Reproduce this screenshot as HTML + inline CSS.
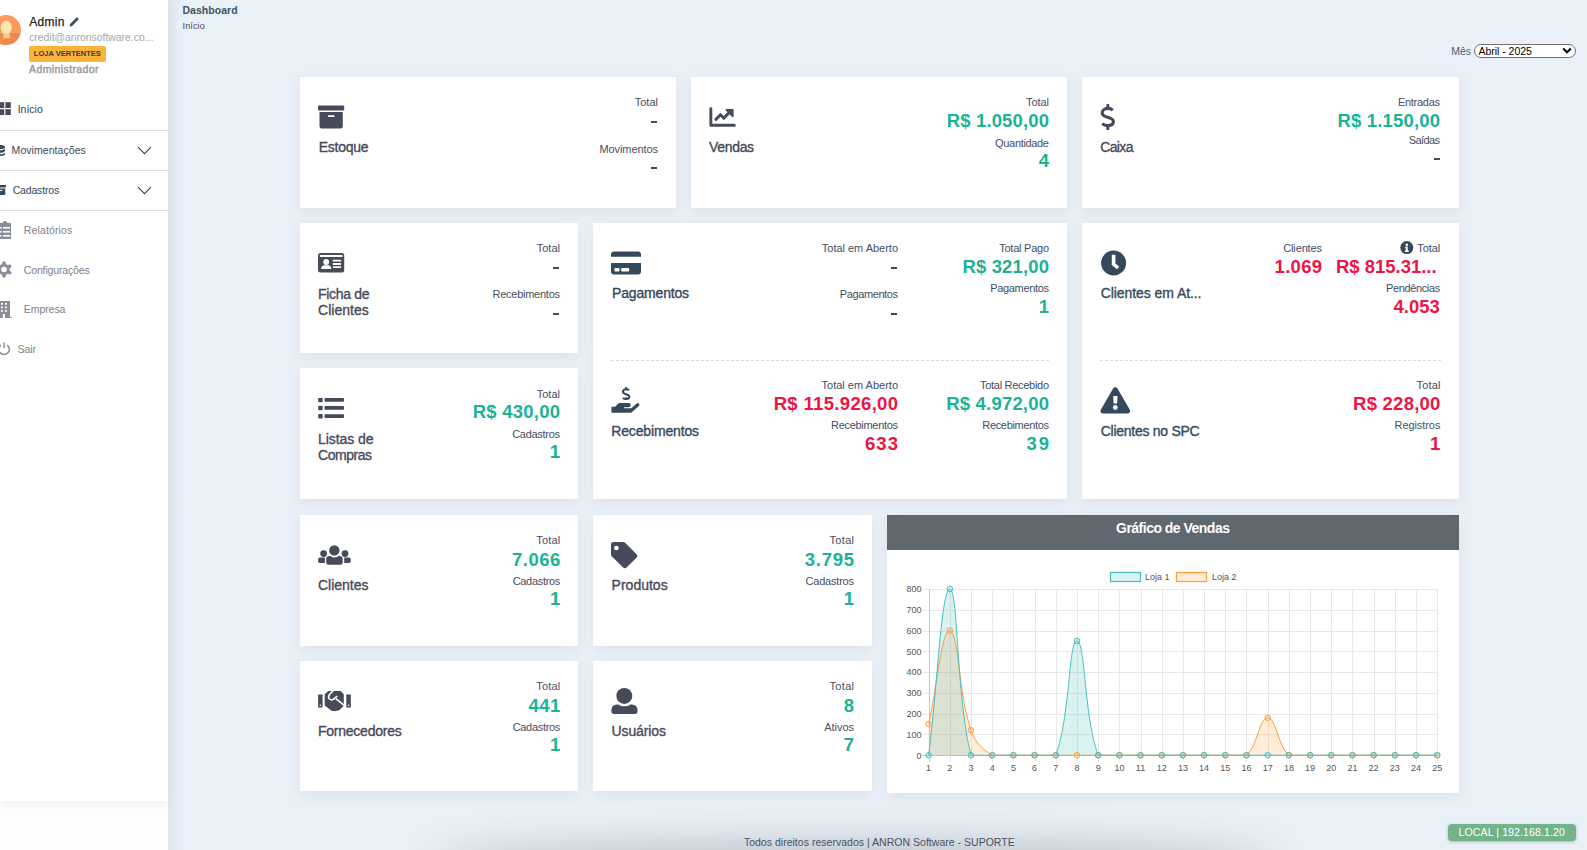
<!DOCTYPE html>
<html><head><meta charset="utf-8"><title>Dashboard</title>
<style>
html,body{margin:0;padding:0;width:1587px;height:850px;overflow:hidden;}
body{background:#eaf0f8;font-family:"Liberation Sans",sans-serif;position:relative;}
.t{position:absolute;white-space:nowrap;font-family:"Liberation Sans",sans-serif;}
.card{position:absolute;background:#fff;box-shadow:0 4px 12px rgba(60,72,72,0.08);}
</style></head><body>
<div style="position:absolute;left:0;top:801px;width:168px;height:49px;background:#fdfdfd"></div>
<div style="position:absolute;left:168px;top:0;width:16px;height:850px;background:linear-gradient(to right,rgba(30,55,85,0.05),rgba(30,55,85,0))"></div>
<div style="position:absolute;left:440px;top:852px;width:830px;height:30px;box-shadow:0 0 40px 6px rgba(50,60,60,0.3);border-radius:50%"></div>
<div class="card" style="left:300px;top:77px;width:376px;height:131px"></div><div class="card" style="left:691px;top:77px;width:376px;height:131px"></div><div class="card" style="left:1082px;top:77px;width:377px;height:131px"></div><div class="card" style="left:300px;top:223px;width:278px;height:130px"></div><div class="card" style="left:300px;top:368px;width:278px;height:131px"></div><div class="card" style="left:593px;top:223px;width:474px;height:276px"></div><div class="card" style="left:1082px;top:223px;width:377px;height:276px"></div><div class="card" style="left:300px;top:515px;width:278px;height:131px"></div><div class="card" style="left:593px;top:515px;width:279px;height:131px"></div><div class="card" style="left:300px;top:661px;width:278px;height:130px"></div><div class="card" style="left:593px;top:661px;width:279px;height:130px"></div><div class="t" style="left:318.8px;top:140px;font-size:14px;line-height:14px;font-weight:400;color:#474a5b;letter-spacing:-0.267px;-webkit-text-stroke:0.35px #474a5b;">Estoque</div><div class="t" style="right:929.00px;top:97px;font-size:11px;line-height:11px;font-weight:400;color:#4a4e5f;">Total</div><div style="position:absolute;left:651px;top:121px;width:6px;height:2px;background:#474a5b;"></div><div class="t" style="right:929.09px;top:144px;font-size:11px;line-height:11px;font-weight:400;color:#4a4e5f;letter-spacing:-0.089px;">Movimentos</div><div style="position:absolute;left:651px;top:167px;width:6px;height:2px;background:#474a5b;"></div><div class="t" style="left:709px;top:140px;font-size:14px;line-height:14px;font-weight:400;color:#474a5b;letter-spacing:-0.320px;-webkit-text-stroke:0.35px #474a5b;">Vendas</div><div class="t" style="right:538.05px;top:97px;font-size:11px;line-height:11px;font-weight:400;color:#4a4e5f;letter-spacing:-0.050px;">Total</div><div class="t" style="right:537.85px;top:112px;font-size:18.5px;line-height:18.5px;font-weight:700;color:#1ab394;letter-spacing:0.150px;">R$ 1.050,00</div><div class="t" style="right:538.33px;top:138px;font-size:11px;line-height:11px;font-weight:400;color:#4a4e5f;letter-spacing:-0.333px;">Quantidade</div><div class="t" style="right:538.00px;top:151.5px;font-size:18.5px;line-height:18.5px;font-weight:700;color:#1ab394;">4</div><div class="t" style="left:1100.2px;top:140px;font-size:14px;line-height:14px;font-weight:400;color:#474a5b;letter-spacing:-0.625px;-webkit-text-stroke:0.35px #474a5b;">Caixa</div><div class="t" style="right:147.29px;top:97px;font-size:11px;line-height:11px;font-weight:400;color:#4a4e5f;letter-spacing:-0.286px;">Entradas</div><div class="t" style="right:146.82px;top:112px;font-size:18.5px;line-height:18.5px;font-weight:700;color:#1ab394;letter-spacing:0.180px;">R$ 1.150,00</div><div class="t" style="right:147.60px;top:135px;font-size:11px;line-height:11px;font-weight:400;color:#4a4e5f;letter-spacing:-0.600px;">Saídas</div><div style="position:absolute;left:1434px;top:158px;width:6px;height:2px;background:#474a5b;"></div><div class="t" style="left:318.1px;top:287px;font-size:14px;line-height:14px;font-weight:400;color:#474a5b;letter-spacing:-0.329px;-webkit-text-stroke:0.35px #474a5b;">Ficha de</div><div class="t" style="left:318.1px;top:303px;font-size:14px;line-height:14px;font-weight:400;color:#474a5b;-webkit-text-stroke:0.35px #474a5b;">Clientes</div><div class="t" style="right:1027.00px;top:243px;font-size:11px;line-height:11px;font-weight:400;color:#4a4e5f;">Total</div><div style="position:absolute;left:553px;top:267px;width:6px;height:2px;background:#474a5b;"></div><div class="t" style="right:1027.25px;top:289px;font-size:11px;line-height:11px;font-weight:400;color:#4a4e5f;letter-spacing:-0.255px;">Recebimentos</div><div style="position:absolute;left:553px;top:313px;width:6px;height:2px;background:#474a5b;"></div><div class="t" style="left:318px;top:432px;font-size:14px;line-height:14px;font-weight:400;color:#474a5b;letter-spacing:-0.062px;-webkit-text-stroke:0.35px #474a5b;">Listas de</div><div class="t" style="left:318px;top:448px;font-size:14px;line-height:14px;font-weight:400;color:#474a5b;letter-spacing:-0.467px;-webkit-text-stroke:0.35px #474a5b;">Compras</div><div class="t" style="right:1027.00px;top:389px;font-size:11px;line-height:11px;font-weight:400;color:#4a4e5f;">Total</div><div class="t" style="right:1026.75px;top:403px;font-size:18.5px;line-height:18.5px;font-weight:700;color:#1ab394;letter-spacing:0.250px;">R$ 430,00</div><div class="t" style="right:1027.29px;top:429px;font-size:11px;line-height:11px;font-weight:400;color:#4a4e5f;letter-spacing:-0.287px;">Cadastros</div><div class="t" style="right:1027.00px;top:443px;font-size:18.5px;line-height:18.5px;font-weight:700;color:#1ab394;">1</div><div class="t" style="left:612px;top:286px;font-size:14px;line-height:14px;font-weight:400;color:#34495e;letter-spacing:-0.167px;-webkit-text-stroke:0.35px #34495e;">Pagamentos</div><div class="t" style="right:689.02px;top:243px;font-size:11px;line-height:11px;font-weight:400;color:#3e4f62;letter-spacing:-0.021px;">Total em Aberto</div><div style="position:absolute;left:891px;top:267px;width:6px;height:2px;background:#34495e;"></div><div class="t" style="right:689.39px;top:289px;font-size:11px;line-height:11px;font-weight:400;color:#3e4f62;letter-spacing:-0.389px;">Pagamentos</div><div style="position:absolute;left:891px;top:313px;width:6px;height:2px;background:#34495e;"></div><div class="t" style="right:538.24px;top:243px;font-size:11px;line-height:11px;font-weight:400;color:#3e4f62;letter-spacing:-0.244px;">Total Pago</div><div class="t" style="right:537.85px;top:258px;font-size:18.5px;line-height:18.5px;font-weight:700;color:#1ab394;letter-spacing:0.150px;">R$ 321,00</div><div class="t" style="right:538.33px;top:283px;font-size:11px;line-height:11px;font-weight:400;color:#3e4f62;letter-spacing:-0.333px;">Pagamentos</div><div class="t" style="right:538.00px;top:298px;font-size:18.5px;line-height:18.5px;font-weight:700;color:#1ab394;">1</div><div style="position:absolute;left:611px;top:360px;width:438px;border-top:1px dashed #d5d8dc"></div><div class="t" style="left:611.2px;top:424px;font-size:14px;line-height:14px;font-weight:400;color:#34495e;letter-spacing:-0.145px;-webkit-text-stroke:0.35px #34495e;">Recebimentos</div><div class="t" style="right:689.00px;top:380px;font-size:11px;line-height:11px;font-weight:400;color:#3e4f62;">Total em Aberto</div><div class="t" style="right:688.67px;top:394.5px;font-size:18.5px;line-height:18.5px;font-weight:700;color:#ef1443;letter-spacing:0.333px;">R$ 115.926,00</div><div class="t" style="right:689.31px;top:420px;font-size:11px;line-height:11px;font-weight:400;color:#3e4f62;letter-spacing:-0.309px;">Recebimentos</div><div class="t" style="right:687.90px;top:435px;font-size:18.5px;line-height:18.5px;font-weight:700;color:#ef1443;letter-spacing:1.100px;">633</div><div class="t" style="right:538.29px;top:380px;font-size:11px;line-height:11px;font-weight:400;color:#3e4f62;letter-spacing:-0.292px;">Total Recebido</div><div class="t" style="right:537.80px;top:394.5px;font-size:18.5px;line-height:18.5px;font-weight:700;color:#1ab394;letter-spacing:0.200px;">R$ 4.972,00</div><div class="t" style="right:538.33px;top:420px;font-size:11px;line-height:11px;font-weight:400;color:#3e4f62;letter-spacing:-0.327px;">Recebimentos</div><div class="t" style="right:536.00px;top:435px;font-size:18.5px;line-height:18.5px;font-weight:700;color:#1ab394;letter-spacing:2.000px;">39</div><div class="t" style="left:1100.7px;top:286px;font-size:14px;line-height:14px;font-weight:400;color:#34495e;letter-spacing:-0.069px;-webkit-text-stroke:0.35px #34495e;">Clientes em At...</div><div class="t" style="right:265.14px;top:243px;font-size:11px;line-height:11px;font-weight:400;color:#3e4f62;letter-spacing:-0.143px;">Clientes</div><div class="t" style="right:264.73px;top:258px;font-size:18.5px;line-height:18.5px;font-weight:700;color:#ef1443;letter-spacing:0.275px;">1.069</div><div class="t" style="right:146.87px;top:243px;font-size:11px;line-height:11px;font-weight:400;color:#3e4f62;letter-spacing:-0.075px;">Total</div><div class="t" style="right:150.42px;top:258px;font-size:18.5px;line-height:18.5px;font-weight:700;color:#ef1443;letter-spacing:-0.018px;">R$ 815.31...</div><div class="t" style="right:147.17px;top:283px;font-size:11px;line-height:11px;font-weight:400;color:#3e4f62;letter-spacing:-0.367px;">Pendências</div><div class="t" style="right:147.18px;top:298px;font-size:18.5px;line-height:18.5px;font-weight:700;color:#ef1443;letter-spacing:0.025px;">4.053</div><div style="position:absolute;left:1100px;top:360px;width:341px;border-top:1px dashed #d5d8dc"></div><div class="t" style="left:1100.7px;top:424px;font-size:14px;line-height:14px;font-weight:400;color:#34495e;letter-spacing:-0.264px;-webkit-text-stroke:0.35px #34495e;">Clientes no SPC</div><div class="t" style="right:146.45px;top:380px;font-size:11px;line-height:11px;font-weight:400;color:#3e4f62;letter-spacing:0.150px;">Total</div><div class="t" style="right:146.35px;top:394.5px;font-size:18.5px;line-height:18.5px;font-weight:700;color:#ef1443;letter-spacing:0.250px;">R$ 228,00</div><div class="t" style="right:146.67px;top:420px;font-size:11px;line-height:11px;font-weight:400;color:#3e4f62;letter-spacing:-0.075px;">Registros</div><div class="t" style="right:146.60px;top:435px;font-size:18.5px;line-height:18.5px;font-weight:700;color:#ef1443;">1</div><div class="t" style="left:317.9px;top:578px;font-size:14px;line-height:14px;font-weight:400;color:#474a5b;letter-spacing:0.014px;-webkit-text-stroke:0.35px #474a5b;">Clientes</div><div class="t" style="right:1026.50px;top:535px;font-size:11px;line-height:11px;font-weight:400;color:#4a4e5f;letter-spacing:0.200px;">Total</div><div class="t" style="right:1026.20px;top:550.5px;font-size:18.5px;line-height:18.5px;font-weight:700;color:#1ab394;letter-spacing:0.500px;">7.066</div><div class="t" style="right:1027.01px;top:576px;font-size:11px;line-height:11px;font-weight:400;color:#4a4e5f;letter-spacing:-0.312px;">Cadastros</div><div class="t" style="right:1026.70px;top:590px;font-size:18.5px;line-height:18.5px;font-weight:700;color:#1ab394;">1</div><div class="t" style="left:611.6px;top:578px;font-size:14px;line-height:14px;font-weight:400;color:#474a5b;-webkit-text-stroke:0.35px #474a5b;">Produtos</div><div class="t" style="right:732.70px;top:535px;font-size:11px;line-height:11px;font-weight:400;color:#4a4e5f;letter-spacing:0.300px;">Total</div><div class="t" style="right:732.25px;top:550.5px;font-size:18.5px;line-height:18.5px;font-weight:700;color:#1ab394;letter-spacing:0.750px;">3.795</div><div class="t" style="right:733.21px;top:576px;font-size:11px;line-height:11px;font-weight:400;color:#4a4e5f;letter-spacing:-0.213px;">Cadastros</div><div class="t" style="right:733.00px;top:590px;font-size:18.5px;line-height:18.5px;font-weight:700;color:#1ab394;">1</div><div class="t" style="left:317.9px;top:724px;font-size:14px;line-height:14px;font-weight:400;color:#474a5b;letter-spacing:-0.227px;-webkit-text-stroke:0.35px #474a5b;">Fornecedores</div><div class="t" style="right:1026.50px;top:681px;font-size:11px;line-height:11px;font-weight:400;color:#4a4e5f;letter-spacing:0.200px;">Total</div><div class="t" style="right:1026.20px;top:696.5px;font-size:18.5px;line-height:18.5px;font-weight:700;color:#1ab394;letter-spacing:0.500px;">441</div><div class="t" style="right:1027.01px;top:722px;font-size:11px;line-height:11px;font-weight:400;color:#4a4e5f;letter-spacing:-0.312px;">Cadastros</div><div class="t" style="right:1026.70px;top:736px;font-size:18.5px;line-height:18.5px;font-weight:700;color:#1ab394;">1</div><div class="t" style="left:611.6px;top:724px;font-size:14px;line-height:14px;font-weight:400;color:#474a5b;letter-spacing:-0.129px;-webkit-text-stroke:0.35px #474a5b;">Usuários</div><div class="t" style="right:732.70px;top:681px;font-size:11px;line-height:11px;font-weight:400;color:#4a4e5f;letter-spacing:0.300px;">Total</div><div class="t" style="right:733.00px;top:696.5px;font-size:18.5px;line-height:18.5px;font-weight:700;color:#1ab394;">8</div><div class="t" style="right:733.04px;top:722px;font-size:11px;line-height:11px;font-weight:400;color:#4a4e5f;letter-spacing:-0.040px;">Ativos</div><div class="t" style="right:733.00px;top:736px;font-size:18.5px;line-height:18.5px;font-weight:700;color:#1ab394;">7</div><svg style="position:absolute;left:318px;top:105px" width="27" height="24" viewBox="0 0 27 24"><rect x="0" y="0.6" width="26.2" height="4.9" rx="1.2" fill="#474a5b"/><path d="M1.5 7h23.3v14.3a2.2 2.2 0 0 1-2.2 2.2H3.7a2.2 2.2 0 0 1-2.2-2.2z" fill="#474a5b"/><rect x="9.8" y="10.3" width="6.8" height="1.8" rx="0.9" fill="#fff"/></svg><svg style="position:absolute;left:700px;top:95px" width="40" height="40" viewBox="0 0 40 40"><path d="M9.4 13.7a1.45 1.45 0 0 1 2.9 0V28.8h22a1.5 1.5 0 0 1 0 3H10.9a1.5 1.5 0 0 1-1.5-1.5z" fill="#474a5b"/><path d="M15.9 24.4l4.6-4.6 3.3 3.3 6.3-6.3" fill="none" stroke="#474a5b" stroke-width="3" stroke-linejoin="miter" stroke-linecap="round"/><path d="M26.4 14.1h6.3a.9.9 0 0 1 .9.9v6.3a.8.8 0 0 1-1.4.6l-6.4-6.4a.8.8 0 0 1 .6-1.4z" fill="#474a5b"/></svg><svg style="position:absolute;left:1090px;top:95px" width="40" height="40" viewBox="0 0 40 40"><rect x="16.3" y="8.9" width="3" height="4.5" rx="0.8" fill="#474a5b"/><rect x="16.3" y="30.5" width="3" height="4.5" rx="0.8" fill="#474a5b"/><path d="M22.8 15.3C21.5 13.9 19.8 13.4 17.8 13.4C14.6 13.4 12.2 15.2 12.2 17.9C12.2 20.6 14.6 21.4 17.7 22.2C21 23.1 23.4 24 23.4 26.6C23.4 29.3 21 30.6 17.8 30.6C15.7 30.6 13.6 30 12.2 28.5" fill="none" stroke="#474a5b" stroke-width="3.1"/></svg><svg style="position:absolute;left:318px;top:253px" width="27" height="20" viewBox="0 0 27 20"><rect x="0" y="0" width="26.2" height="19.6" rx="2.5" fill="#474a5b"/><rect x="1.8" y="1.9" width="22.7" height="2.1" rx="0.6" fill="#fff"/><circle cx="8.2" cy="9" r="2.9" fill="#fff"/><path d="M3.1 16v-.5c0-1.9 1.4-3.2 3.3-3.2h3.7c1.9 0 3.1 1.3 3.1 3.2v.5z" fill="#fff"/><rect x="14.8" y="6.8" width="8.3" height="1.8" rx="0.4" fill="#fff"/><rect x="14.8" y="10.1" width="8.3" height="1.8" rx="0.4" fill="#fff"/><rect x="14.8" y="13.3" width="8.3" height="1.8" rx="0.4" fill="#fff"/></svg><svg style="position:absolute;left:318px;top:398px" width="27" height="21" viewBox="0 0 27 21"><rect x="0.2" y="-0.3" width="4.5" height="4.5" rx="1" fill="#474a5b"/><rect x="0.2" y="7.8" width="4.5" height="4.5" rx="1" fill="#474a5b"/><rect x="0.2" y="15.9" width="4.5" height="4.5" rx="1" fill="#474a5b"/><rect x="6.5" y="0" width="19.5" height="3.7" rx="0.9" fill="#474a5b"/><rect x="6.5" y="8.1" width="19.5" height="3.7" rx="0.9" fill="#474a5b"/><rect x="6.5" y="16.2" width="19.5" height="3.7" rx="0.9" fill="#474a5b"/></svg><svg style="position:absolute;left:611px;top:251px" width="31" height="25" viewBox="0 0 31 25"><path d="M0 3.5a3 3 0 0 1 3-3h24a3 3 0 0 1 3 3v2.2H0z" fill="#34495e"/><path d="M0 12h30v8.5a3 3 0 0 1-3 3H3a3 3 0 0 1-3-3z" fill="#34495e"/><rect x="3.5" y="17" width="5" height="3.5" rx="0.8" fill="#fff"/><rect x="10.2" y="17" width="8" height="3.5" rx="0.8" fill="#fff"/></svg><svg style="position:absolute;left:605px;top:380px" width="40" height="40" viewBox="0 0 40 40"><rect x="20.2" y="7" width="1.9" height="2.6" rx="0.5" fill="#34495e"/><rect x="20.2" y="17.2" width="1.9" height="2.6" rx="0.5" fill="#34495e"/><path d="M24 10.3C23.3 9.6 22.3 9.3 21.2 9.3C19.3 9.3 17.9 10.3 17.9 11.8C17.9 13.4 19.3 13.8 21.1 14.3C23 14.8 24.3 15.3 24.3 16.8C24.3 18.3 23 19 21.1 19C19.9 19 18.7 18.7 17.9 17.8" fill="none" stroke="#34495e" stroke-width="2"/><path d="M6.4 26.8H10.1L13.3 23.6Q13.9 23 14.8 23H23.6A2.15 2.15 0 0 1 23.6 27.3H19.3Q18.7 27.3 18.9 27.8Q19.1 28.3 19.8 28.3H26.2L31.8 23.6A1.55 1.55 0 0 1 33.9 25.9L26.7 32.2Q26.1 32.7 25.3 32.7H6.4Z" fill="#34495e"/></svg><svg style="position:absolute;left:1095px;top:244px" width="40" height="40" viewBox="0 0 40 40"><circle cx="18.6" cy="19" r="12.5" fill="#34495e"/><path d="M16.8 10.8h3.6v8.6l3.8 3.1-2.2 2.8-5.2-4.2z" fill="#fff"/></svg><svg style="position:absolute;left:1100px;top:386px" width="31" height="28" viewBox="0 0 31 28"><path d="M15.3 1.2c.9 0 1.7.5 2.2 1.3l12.3 21.3c.9 1.7-.3 3.7-2.2 3.7H3C1.1 27.5-.1 25.5.8 23.8L13.1 2.5c.5-.8 1.3-1.3 2.2-1.3z" fill="#34495e"/><path d="M13.2 10h4.3l-.4 7.6h-3.5z" fill="#fff"/><circle cx="15.3" cy="21.5" r="2.4" fill="#fff"/></svg><svg style="position:absolute;left:1400px;top:241px" width="14" height="14" viewBox="0 0 14 14"><circle cx="6.8" cy="6.6" r="6.5" fill="#34495e"/><circle cx="6.8" cy="3.7" r="1.2" fill="#fff"/><path d="M5.3 5.6h2.4v4h1v1.3H4.8V9.6h1V6.9h-.5z" fill="#fff"/></svg><svg style="position:absolute;left:312px;top:536px" width="44" height="36" viewBox="0 0 44 36"><circle cx="22.3" cy="14.4" r="5.2" fill="#474a5b"/><circle cx="11.65" cy="17.6" r="3.4" fill="#474a5b"/><circle cx="33" cy="17.6" r="3.4" fill="#474a5b"/><path d="M14.2 26.6V23.3Q14.2 20.1 17.4 20.1H18.4Q20 21.6 22.4 21.6Q24.8 21.6 26.4 20.1H27.5Q30.7 20.1 30.7 23.3V26.6Q30.7 28.8 28.5 28.8H16.4Q14.2 28.8 14.2 26.6Z" fill="#474a5b"/><path d="M6.1 25.2V23.6Q6.1 21.6 8.1 21.6H12.9V26.9H7.8Q6.1 26.9 6.1 25.2Z" fill="#474a5b"/><path d="M38.8 25.2V23.6Q38.8 21.6 36.8 21.6H32.2V26.9H37.1Q38.8 26.9 38.8 25.2Z" fill="#474a5b"/></svg><svg style="position:absolute;left:611px;top:542px" width="28" height="28" viewBox="0 0 28 28"><g transform="scale(0.97)"><path d="M0 2.5A2.5 2.5 0 0 1 2.5 0h10.3c.7 0 1.3.3 1.8.7l11.8 11.8c1 1 1 2.6 0 3.6L16.1 26.4c-1 1-2.6 1-3.6 0L.7 14.6C.3 14.1 0 13.5 0 12.8z" fill="#474a5b"/><circle cx="5.6" cy="6.2" r="2.4" fill="#fff"/></g></svg><svg style="position:absolute;left:312px;top:682px" width="44" height="36" viewBox="0 0 44 36"><rect x="6.1" y="12.5" width="4.5" height="13.1" rx="0.7" fill="#474a5b"/><rect x="34.3" y="12.5" width="4.5" height="13.1" rx="0.7" fill="#474a5b"/><circle cx="8.4" cy="23.2" r="0.75" fill="#fff"/><circle cx="36.5" cy="23.2" r="0.75" fill="#fff"/><path d="M12.7 12.2L16.3 9.1H28.7L31.8 12.2V22.4Q31.6 24 30.6 24.6Q30.4 26.3 28.9 26.6Q28.3 28.1 26.7 28.2Q25.8 29 24.4 28.8Q23.3 29.4 22.2 28.9Q20.9 29.2 19.6 28.8L12.7 23.4Z" fill="#474a5b"/><path d="M21.6 8.3L17.6 12.5Q15.6 15 17.4 17Q19.4 18.8 21.6 17.1L25.3 14" fill="none" stroke="#fff" stroke-width="1.6"/><path d="M23.8 16.6L31.9 23.2" stroke="#fff" stroke-width="1.6"/></svg><svg style="position:absolute;left:605px;top:682px" width="40" height="40" viewBox="0 0 40 40"><circle cx="19.3" cy="13.9" r="8" fill="#474a5b"/><path d="M6.4 29.3V28.3Q6.4 22.6 12.1 22.4H13.4Q16 24.3 19.4 24.3Q22.8 24.3 25.4 22.4H26.8Q32.5 22.6 32.5 28.3V29.3Q32.5 32 29.8 32H9.1Q6.4 32 6.4 29.3Z" fill="#474a5b"/></svg><div class="card" style="left:887px;top:515px;width:572px;height:278px"></div><div style="position:absolute;left:887px;top:515px;width:572px;height:35px;background:#5f676f"></div><svg style="position:absolute;left:0;top:0" width="1587" height="850"><line x1="929.5" y1="589" x2="929.5" y2="762" stroke="#e8e8e8"/><line x1="950.5" y1="589" x2="950.5" y2="762" stroke="#e8e8e8"/><line x1="971.5" y1="589" x2="971.5" y2="762" stroke="#e8e8e8"/><line x1="992.5" y1="589" x2="992.5" y2="762" stroke="#e8e8e8"/><line x1="1013.5" y1="589" x2="1013.5" y2="762" stroke="#e8e8e8"/><line x1="1035.5" y1="589" x2="1035.5" y2="762" stroke="#e8e8e8"/><line x1="1056.5" y1="589" x2="1056.5" y2="762" stroke="#e8e8e8"/><line x1="1077.5" y1="589" x2="1077.5" y2="762" stroke="#e8e8e8"/><line x1="1098.5" y1="589" x2="1098.5" y2="762" stroke="#e8e8e8"/><line x1="1119.5" y1="589" x2="1119.5" y2="762" stroke="#e8e8e8"/><line x1="1141.5" y1="589" x2="1141.5" y2="762" stroke="#e8e8e8"/><line x1="1162.5" y1="589" x2="1162.5" y2="762" stroke="#e8e8e8"/><line x1="1183.5" y1="589" x2="1183.5" y2="762" stroke="#e8e8e8"/><line x1="1204.5" y1="589" x2="1204.5" y2="762" stroke="#e8e8e8"/><line x1="1225.5" y1="589" x2="1225.5" y2="762" stroke="#e8e8e8"/><line x1="1246.5" y1="589" x2="1246.5" y2="762" stroke="#e8e8e8"/><line x1="1268.5" y1="589" x2="1268.5" y2="762" stroke="#e8e8e8"/><line x1="1289.5" y1="589" x2="1289.5" y2="762" stroke="#e8e8e8"/><line x1="1310.5" y1="589" x2="1310.5" y2="762" stroke="#e8e8e8"/><line x1="1331.5" y1="589" x2="1331.5" y2="762" stroke="#e8e8e8"/><line x1="1352.5" y1="589" x2="1352.5" y2="762" stroke="#e8e8e8"/><line x1="1374.5" y1="589" x2="1374.5" y2="762" stroke="#e8e8e8"/><line x1="1395.5" y1="589" x2="1395.5" y2="762" stroke="#e8e8e8"/><line x1="1416.5" y1="589" x2="1416.5" y2="762" stroke="#e8e8e8"/><line x1="1437.5" y1="589" x2="1437.5" y2="762" stroke="#e8e8e8"/><line x1="922" y1="755.5" x2="1437.5" y2="755.5" stroke="#e8e8e8"/><line x1="922" y1="734.5" x2="1437.5" y2="734.5" stroke="#e8e8e8"/><line x1="922" y1="714.5" x2="1437.5" y2="714.5" stroke="#e8e8e8"/><line x1="922" y1="693.5" x2="1437.5" y2="693.5" stroke="#e8e8e8"/><line x1="922" y1="672.5" x2="1437.5" y2="672.5" stroke="#e8e8e8"/><line x1="922" y1="651.5" x2="1437.5" y2="651.5" stroke="#e8e8e8"/><line x1="922" y1="631.5" x2="1437.5" y2="631.5" stroke="#e8e8e8"/><line x1="922" y1="610.5" x2="1437.5" y2="610.5" stroke="#e8e8e8"/><line x1="922" y1="589.5" x2="1437.5" y2="589.5" stroke="#e8e8e8"/><line x1="929.5" y1="589" x2="929.5" y2="762" stroke="#c6c6c6"/><line x1="922" y1="755.5" x2="1437.5" y2="755.5" stroke="#c6c6c6"/><text x="921.5" y="758.5" text-anchor="end" font-family="Liberation Sans" font-size="9" fill="#555">0</text><text x="921.5" y="737.7" text-anchor="end" font-family="Liberation Sans" font-size="9" fill="#555">100</text><text x="921.5" y="716.9" text-anchor="end" font-family="Liberation Sans" font-size="9" fill="#555">200</text><text x="921.5" y="696.2" text-anchor="end" font-family="Liberation Sans" font-size="9" fill="#555">300</text><text x="921.5" y="675.4" text-anchor="end" font-family="Liberation Sans" font-size="9" fill="#555">400</text><text x="921.5" y="654.6" text-anchor="end" font-family="Liberation Sans" font-size="9" fill="#555">500</text><text x="921.5" y="633.8" text-anchor="end" font-family="Liberation Sans" font-size="9" fill="#555">600</text><text x="921.5" y="613.0" text-anchor="end" font-family="Liberation Sans" font-size="9" fill="#555">700</text><text x="921.5" y="592.3" text-anchor="end" font-family="Liberation Sans" font-size="9" fill="#555">800</text><text x="928.6" y="771" text-anchor="middle" font-family="Liberation Sans" font-size="9" fill="#555">1</text><text x="949.8" y="771" text-anchor="middle" font-family="Liberation Sans" font-size="9" fill="#555">2</text><text x="971.0" y="771" text-anchor="middle" font-family="Liberation Sans" font-size="9" fill="#555">3</text><text x="992.2" y="771" text-anchor="middle" font-family="Liberation Sans" font-size="9" fill="#555">4</text><text x="1013.4" y="771" text-anchor="middle" font-family="Liberation Sans" font-size="9" fill="#555">5</text><text x="1034.6" y="771" text-anchor="middle" font-family="Liberation Sans" font-size="9" fill="#555">6</text><text x="1055.8" y="771" text-anchor="middle" font-family="Liberation Sans" font-size="9" fill="#555">7</text><text x="1077.0" y="771" text-anchor="middle" font-family="Liberation Sans" font-size="9" fill="#555">8</text><text x="1098.2" y="771" text-anchor="middle" font-family="Liberation Sans" font-size="9" fill="#555">9</text><text x="1119.4" y="771" text-anchor="middle" font-family="Liberation Sans" font-size="9" fill="#555">10</text><text x="1140.5" y="771" text-anchor="middle" font-family="Liberation Sans" font-size="9" fill="#555">11</text><text x="1161.7" y="771" text-anchor="middle" font-family="Liberation Sans" font-size="9" fill="#555">12</text><text x="1182.9" y="771" text-anchor="middle" font-family="Liberation Sans" font-size="9" fill="#555">13</text><text x="1204.1" y="771" text-anchor="middle" font-family="Liberation Sans" font-size="9" fill="#555">14</text><text x="1225.3" y="771" text-anchor="middle" font-family="Liberation Sans" font-size="9" fill="#555">15</text><text x="1246.5" y="771" text-anchor="middle" font-family="Liberation Sans" font-size="9" fill="#555">16</text><text x="1267.7" y="771" text-anchor="middle" font-family="Liberation Sans" font-size="9" fill="#555">17</text><text x="1288.9" y="771" text-anchor="middle" font-family="Liberation Sans" font-size="9" fill="#555">18</text><text x="1310.1" y="771" text-anchor="middle" font-family="Liberation Sans" font-size="9" fill="#555">19</text><text x="1331.3" y="771" text-anchor="middle" font-family="Liberation Sans" font-size="9" fill="#555">20</text><text x="1352.5" y="771" text-anchor="middle" font-family="Liberation Sans" font-size="9" fill="#555">21</text><text x="1373.6" y="771" text-anchor="middle" font-family="Liberation Sans" font-size="9" fill="#555">22</text><text x="1394.8" y="771" text-anchor="middle" font-family="Liberation Sans" font-size="9" fill="#555">23</text><text x="1416.0" y="771" text-anchor="middle" font-family="Liberation Sans" font-size="9" fill="#555">24</text><text x="1437.2" y="771" text-anchor="middle" font-family="Liberation Sans" font-size="9" fill="#555">25</text><path d="M928.65 724.03 C937.13 686.63 941.62 629.31 949.84 630.52 C958.58 631.81 958.20 692.51 971.03 730.26 C975.15 742.38 981.93 749.15 992.22 755.20 C998.88 755.20 1004.93 755.20 1013.41 755.20 C1021.89 755.20 1026.12 755.20 1034.60 755.20 C1043.08 755.20 1047.31 755.20 1055.79 755.20 C1064.27 755.20 1068.50 755.20 1076.98 755.20 C1085.46 755.20 1089.69 755.20 1098.17 755.20 C1106.65 755.20 1110.88 755.20 1119.36 755.20 C1127.84 755.20 1132.07 755.20 1140.55 755.20 C1149.03 755.20 1153.26 755.20 1161.74 755.20 C1170.22 755.20 1174.45 755.20 1182.93 755.20 C1191.41 755.20 1195.64 755.20 1204.12 755.20 C1212.60 755.20 1216.83 755.20 1225.31 755.20 C1233.79 755.20 1240.90 755.20 1246.50 755.20 C1257.85 745.18 1259.21 717.80 1267.69 717.80 C1276.17 717.80 1277.53 745.18 1288.88 755.20 C1294.48 755.20 1301.59 755.20 1310.07 755.20 C1318.55 755.20 1322.78 755.20 1331.26 755.20 C1339.74 755.20 1343.97 755.20 1352.45 755.20 C1360.93 755.20 1365.16 755.20 1373.64 755.20 C1382.12 755.20 1386.35 755.20 1394.83 755.20 C1403.31 755.20 1407.54 755.20 1416.02 755.20 C1424.50 755.20 1428.73 755.20 1437.21 755.20 L1437.21 755.2 L928.65 755.2 Z" fill="rgba(255,159,64,0.2)"/><path d="M928.65 724.03 C937.13 686.63 941.62 629.31 949.84 630.52 C958.58 631.81 958.20 692.51 971.03 730.26 C975.15 742.38 981.93 749.15 992.22 755.20 C998.88 755.20 1004.93 755.20 1013.41 755.20 C1021.89 755.20 1026.12 755.20 1034.60 755.20 C1043.08 755.20 1047.31 755.20 1055.79 755.20 C1064.27 755.20 1068.50 755.20 1076.98 755.20 C1085.46 755.20 1089.69 755.20 1098.17 755.20 C1106.65 755.20 1110.88 755.20 1119.36 755.20 C1127.84 755.20 1132.07 755.20 1140.55 755.20 C1149.03 755.20 1153.26 755.20 1161.74 755.20 C1170.22 755.20 1174.45 755.20 1182.93 755.20 C1191.41 755.20 1195.64 755.20 1204.12 755.20 C1212.60 755.20 1216.83 755.20 1225.31 755.20 C1233.79 755.20 1240.90 755.20 1246.50 755.20 C1257.85 745.18 1259.21 717.80 1267.69 717.80 C1276.17 717.80 1277.53 745.18 1288.88 755.20 C1294.48 755.20 1301.59 755.20 1310.07 755.20 C1318.55 755.20 1322.78 755.20 1331.26 755.20 C1339.74 755.20 1343.97 755.20 1352.45 755.20 C1360.93 755.20 1365.16 755.20 1373.64 755.20 C1382.12 755.20 1386.35 755.20 1394.83 755.20 C1403.31 755.20 1407.54 755.20 1416.02 755.20 C1424.50 755.20 1428.73 755.20 1437.21 755.20" fill="none" stroke="rgb(255,159,64)" stroke-width="1"/><path d="M928.65 755.20 C937.13 688.70 941.36 589.00 949.84 588.96 C958.32 589.00 955.98 696.17 971.03 755.20 C972.93 755.20 983.74 755.20 992.22 755.20 C1000.70 755.20 1004.93 755.20 1013.41 755.20 C1021.89 755.20 1026.12 755.20 1034.60 755.20 C1043.08 755.20 1053.18 755.20 1055.79 755.20 C1070.13 716.53 1068.50 640.91 1076.98 640.91 C1085.46 640.91 1083.83 716.53 1098.17 755.20 C1100.78 755.20 1110.88 755.20 1119.36 755.20 C1127.84 755.20 1132.07 755.20 1140.55 755.20 C1149.03 755.20 1153.26 755.20 1161.74 755.20 C1170.22 755.20 1174.45 755.20 1182.93 755.20 C1191.41 755.20 1195.64 755.20 1204.12 755.20 C1212.60 755.20 1216.83 755.20 1225.31 755.20 C1233.79 755.20 1238.02 755.20 1246.50 755.20 C1254.98 755.20 1259.21 755.20 1267.69 755.20 C1276.17 755.20 1280.40 755.20 1288.88 755.20 C1297.36 755.20 1301.59 755.20 1310.07 755.20 C1318.55 755.20 1322.78 755.20 1331.26 755.20 C1339.74 755.20 1343.97 755.20 1352.45 755.20 C1360.93 755.20 1365.16 755.20 1373.64 755.20 C1382.12 755.20 1386.35 755.20 1394.83 755.20 C1403.31 755.20 1407.54 755.20 1416.02 755.20 C1424.50 755.20 1428.73 755.20 1437.21 755.20 L1437.21 755.2 L928.65 755.2 Z" fill="rgba(75,192,192,0.2)"/><path d="M928.65 755.20 C937.13 688.70 941.36 589.00 949.84 588.96 C958.32 589.00 955.98 696.17 971.03 755.20 C972.93 755.20 983.74 755.20 992.22 755.20 C1000.70 755.20 1004.93 755.20 1013.41 755.20 C1021.89 755.20 1026.12 755.20 1034.60 755.20 C1043.08 755.20 1053.18 755.20 1055.79 755.20 C1070.13 716.53 1068.50 640.91 1076.98 640.91 C1085.46 640.91 1083.83 716.53 1098.17 755.20 C1100.78 755.20 1110.88 755.20 1119.36 755.20 C1127.84 755.20 1132.07 755.20 1140.55 755.20 C1149.03 755.20 1153.26 755.20 1161.74 755.20 C1170.22 755.20 1174.45 755.20 1182.93 755.20 C1191.41 755.20 1195.64 755.20 1204.12 755.20 C1212.60 755.20 1216.83 755.20 1225.31 755.20 C1233.79 755.20 1238.02 755.20 1246.50 755.20 C1254.98 755.20 1259.21 755.20 1267.69 755.20 C1276.17 755.20 1280.40 755.20 1288.88 755.20 C1297.36 755.20 1301.59 755.20 1310.07 755.20 C1318.55 755.20 1322.78 755.20 1331.26 755.20 C1339.74 755.20 1343.97 755.20 1352.45 755.20 C1360.93 755.20 1365.16 755.20 1373.64 755.20 C1382.12 755.20 1386.35 755.20 1394.83 755.20 C1403.31 755.20 1407.54 755.20 1416.02 755.20 C1424.50 755.20 1428.73 755.20 1437.21 755.20" fill="none" stroke="rgb(75,192,192)" stroke-width="1"/><circle cx="928.65" cy="724.03" r="2.8" fill="rgba(255,159,64,0.2)" stroke="rgb(255,159,64)" stroke-width="1"/><circle cx="949.84" cy="630.52" r="2.8" fill="rgba(255,159,64,0.2)" stroke="rgb(255,159,64)" stroke-width="1"/><circle cx="971.03" cy="730.26" r="2.8" fill="rgba(255,159,64,0.2)" stroke="rgb(255,159,64)" stroke-width="1"/><circle cx="992.22" cy="755.20" r="2.8" fill="rgba(255,159,64,0.2)" stroke="rgb(255,159,64)" stroke-width="1"/><circle cx="1013.41" cy="755.20" r="2.8" fill="rgba(255,159,64,0.2)" stroke="rgb(255,159,64)" stroke-width="1"/><circle cx="1034.60" cy="755.20" r="2.8" fill="rgba(255,159,64,0.2)" stroke="rgb(255,159,64)" stroke-width="1"/><circle cx="1055.79" cy="755.20" r="2.8" fill="rgba(255,159,64,0.2)" stroke="rgb(255,159,64)" stroke-width="1"/><circle cx="1076.98" cy="755.20" r="2.8" fill="rgba(255,159,64,0.2)" stroke="rgb(255,159,64)" stroke-width="1"/><circle cx="1098.17" cy="755.20" r="2.8" fill="rgba(255,159,64,0.2)" stroke="rgb(255,159,64)" stroke-width="1"/><circle cx="1119.36" cy="755.20" r="2.8" fill="rgba(255,159,64,0.2)" stroke="rgb(255,159,64)" stroke-width="1"/><circle cx="1140.55" cy="755.20" r="2.8" fill="rgba(255,159,64,0.2)" stroke="rgb(255,159,64)" stroke-width="1"/><circle cx="1161.74" cy="755.20" r="2.8" fill="rgba(255,159,64,0.2)" stroke="rgb(255,159,64)" stroke-width="1"/><circle cx="1182.93" cy="755.20" r="2.8" fill="rgba(255,159,64,0.2)" stroke="rgb(255,159,64)" stroke-width="1"/><circle cx="1204.12" cy="755.20" r="2.8" fill="rgba(255,159,64,0.2)" stroke="rgb(255,159,64)" stroke-width="1"/><circle cx="1225.31" cy="755.20" r="2.8" fill="rgba(255,159,64,0.2)" stroke="rgb(255,159,64)" stroke-width="1"/><circle cx="1246.50" cy="755.20" r="2.8" fill="rgba(255,159,64,0.2)" stroke="rgb(255,159,64)" stroke-width="1"/><circle cx="1267.69" cy="717.80" r="2.8" fill="rgba(255,159,64,0.2)" stroke="rgb(255,159,64)" stroke-width="1"/><circle cx="1288.88" cy="755.20" r="2.8" fill="rgba(255,159,64,0.2)" stroke="rgb(255,159,64)" stroke-width="1"/><circle cx="1310.07" cy="755.20" r="2.8" fill="rgba(255,159,64,0.2)" stroke="rgb(255,159,64)" stroke-width="1"/><circle cx="1331.26" cy="755.20" r="2.8" fill="rgba(255,159,64,0.2)" stroke="rgb(255,159,64)" stroke-width="1"/><circle cx="1352.45" cy="755.20" r="2.8" fill="rgba(255,159,64,0.2)" stroke="rgb(255,159,64)" stroke-width="1"/><circle cx="1373.64" cy="755.20" r="2.8" fill="rgba(255,159,64,0.2)" stroke="rgb(255,159,64)" stroke-width="1"/><circle cx="1394.83" cy="755.20" r="2.8" fill="rgba(255,159,64,0.2)" stroke="rgb(255,159,64)" stroke-width="1"/><circle cx="1416.02" cy="755.20" r="2.8" fill="rgba(255,159,64,0.2)" stroke="rgb(255,159,64)" stroke-width="1"/><circle cx="1437.21" cy="755.20" r="2.8" fill="rgba(255,159,64,0.2)" stroke="rgb(255,159,64)" stroke-width="1"/><circle cx="928.65" cy="755.20" r="2.8" fill="rgba(75,192,192,0.2)" stroke="rgb(75,192,192)" stroke-width="1"/><circle cx="949.84" cy="588.96" r="2.8" fill="rgba(75,192,192,0.2)" stroke="rgb(75,192,192)" stroke-width="1"/><circle cx="971.03" cy="755.20" r="2.8" fill="rgba(75,192,192,0.2)" stroke="rgb(75,192,192)" stroke-width="1"/><circle cx="992.22" cy="755.20" r="2.8" fill="rgba(75,192,192,0.2)" stroke="rgb(75,192,192)" stroke-width="1"/><circle cx="1013.41" cy="755.20" r="2.8" fill="rgba(75,192,192,0.2)" stroke="rgb(75,192,192)" stroke-width="1"/><circle cx="1034.60" cy="755.20" r="2.8" fill="rgba(75,192,192,0.2)" stroke="rgb(75,192,192)" stroke-width="1"/><circle cx="1055.79" cy="755.20" r="2.8" fill="rgba(75,192,192,0.2)" stroke="rgb(75,192,192)" stroke-width="1"/><circle cx="1076.98" cy="640.91" r="2.8" fill="rgba(75,192,192,0.2)" stroke="rgb(75,192,192)" stroke-width="1"/><circle cx="1098.17" cy="755.20" r="2.8" fill="rgba(75,192,192,0.2)" stroke="rgb(75,192,192)" stroke-width="1"/><circle cx="1119.36" cy="755.20" r="2.8" fill="rgba(75,192,192,0.2)" stroke="rgb(75,192,192)" stroke-width="1"/><circle cx="1140.55" cy="755.20" r="2.8" fill="rgba(75,192,192,0.2)" stroke="rgb(75,192,192)" stroke-width="1"/><circle cx="1161.74" cy="755.20" r="2.8" fill="rgba(75,192,192,0.2)" stroke="rgb(75,192,192)" stroke-width="1"/><circle cx="1182.93" cy="755.20" r="2.8" fill="rgba(75,192,192,0.2)" stroke="rgb(75,192,192)" stroke-width="1"/><circle cx="1204.12" cy="755.20" r="2.8" fill="rgba(75,192,192,0.2)" stroke="rgb(75,192,192)" stroke-width="1"/><circle cx="1225.31" cy="755.20" r="2.8" fill="rgba(75,192,192,0.2)" stroke="rgb(75,192,192)" stroke-width="1"/><circle cx="1246.50" cy="755.20" r="2.8" fill="rgba(75,192,192,0.2)" stroke="rgb(75,192,192)" stroke-width="1"/><circle cx="1267.69" cy="755.20" r="2.8" fill="rgba(75,192,192,0.2)" stroke="rgb(75,192,192)" stroke-width="1"/><circle cx="1288.88" cy="755.20" r="2.8" fill="rgba(75,192,192,0.2)" stroke="rgb(75,192,192)" stroke-width="1"/><circle cx="1310.07" cy="755.20" r="2.8" fill="rgba(75,192,192,0.2)" stroke="rgb(75,192,192)" stroke-width="1"/><circle cx="1331.26" cy="755.20" r="2.8" fill="rgba(75,192,192,0.2)" stroke="rgb(75,192,192)" stroke-width="1"/><circle cx="1352.45" cy="755.20" r="2.8" fill="rgba(75,192,192,0.2)" stroke="rgb(75,192,192)" stroke-width="1"/><circle cx="1373.64" cy="755.20" r="2.8" fill="rgba(75,192,192,0.2)" stroke="rgb(75,192,192)" stroke-width="1"/><circle cx="1394.83" cy="755.20" r="2.8" fill="rgba(75,192,192,0.2)" stroke="rgb(75,192,192)" stroke-width="1"/><circle cx="1416.02" cy="755.20" r="2.8" fill="rgba(75,192,192,0.2)" stroke="rgb(75,192,192)" stroke-width="1"/><circle cx="1437.21" cy="755.20" r="2.8" fill="rgba(75,192,192,0.2)" stroke="rgb(75,192,192)" stroke-width="1"/><rect x="1110.5" y="572.5" width="30" height="9" fill="rgba(75,192,192,0.2)" stroke="rgb(75,192,192)" stroke-width="1.3"/><text x="1145" y="580.3" font-family="Liberation Sans" font-size="9" fill="#555">Loja 1</text><rect x="1176.5" y="572.5" width="30" height="9" fill="rgba(255,159,64,0.2)" stroke="rgb(255,159,64)" stroke-width="1.3"/><text x="1212" y="580.3" font-family="Liberation Sans" font-size="9" fill="#555">Loja 2</text></svg><div class="t" style="left:772.74px;width:800px;text-align:center;top:521px;font-size:14px;line-height:14px;font-weight:700;color:#fff;letter-spacing:-0.513px;">Gráfico de Vendas</div><div style="position:absolute;left:0;top:0;width:168px;height:801px;background:#fff;box-shadow:0 2px 10px rgba(0,0,0,0.06)"></div><svg style="position:absolute;left:0px;top:14px" width="22" height="32" viewBox="0 0 22 32"><defs><clipPath id="av"><circle cx="6" cy="16.1" r="15"/></clipPath></defs><g clip-path="url(#av)"><rect x="-10" y="0" width="40" height="18.3" fill="#fd9b5a"/><rect x="-10" y="18.3" width="40" height="16" fill="#ef8a4e"/><ellipse cx="6.2" cy="13.6" rx="5.5" ry="7" fill="#fde6b0"/><rect x="3.2" y="19.5" width="6.6" height="4.8" fill="#e6d08c"/></g></svg><div class="t" style="left:29.2px;top:16px;font-size:12px;line-height:12px;font-weight:400;color:#222;letter-spacing:0.275px;-webkit-text-stroke:0.25px #222;">Admin</div><svg style="position:absolute;left:69px;top:17px" width="10" height="10" viewBox="0 0 10 10"><path d="M0.5 9.5l.6-2.6 6.2-6.2a1 1 0 0 1 1.4 0l.6.6a1 1 0 0 1 0 1.4L3.1 8.9z" fill="#474a5b"/></svg><div class="t" style="left:29.2px;top:33px;font-size:10.4px;line-height:10.4px;font-weight:400;color:#a6a7aa;letter-spacing:-0.008px;">credit@anronsoftware.co...</div><div style="position:absolute;left:29px;top:46px;width:77px;height:16px;background:#fcb23b;border-radius:2px"></div><div class="t" style="left:33.8px;top:50px;font-size:7.5px;line-height:7.5px;font-weight:700;color:#333a48;letter-spacing:0.015px;">LOJA VERTENTES</div><div class="t" style="left:29px;top:64px;font-size:10.5px;line-height:10.5px;font-weight:400;color:#9b9c9e;letter-spacing:0.400px;-webkit-text-stroke:0.45px #9b9c9e;">Administrador</div><svg style="position:absolute;left:0px;top:102px" width="11" height="13" viewBox="0 0 11 13"><rect x="0" y="0.2" width="4.2" height="5.8" fill="#474a5b"/><rect x="0" y="7.2" width="4.2" height="5.8" fill="#474a5b"/><rect x="5.4" y="0.2" width="5.4" height="5.8" fill="#474a5b"/><rect x="5.4" y="7.2" width="5.4" height="5.8" fill="#474a5b"/></svg><div class="t" style="left:17.7px;top:103.5px;font-size:10.5px;line-height:10.5px;font-weight:400;color:#353a46;">Início</div><div style="position:absolute;left:0px;top:130px;width:168px;height:1px;background:#dcdcdc;"></div><svg style="position:absolute;left:-4px;top:145px" width="10" height="11" viewBox="0 0 10 11"><ellipse cx="4.5" cy="2" rx="4.5" ry="2" fill="#34495e"/><path d="M0 3.5c1 1.3 3 1.8 4.5 1.8s3.5-.5 4.5-1.8v2.5c-1 1.3-3 1.8-4.5 1.8S1 7.3 0 6z" fill="#34495e"/><path d="M0 7.5c1 1.3 3 1.8 4.5 1.8s3.5-.5 4.5-1.8v1.5c0 1.2-2 2-4.5 2S0 10.2 0 9z" fill="#34495e"/></svg><div class="t" style="left:11.6px;top:144.5px;font-size:10.5px;line-height:10.5px;font-weight:400;color:#34495e;letter-spacing:0.058px;">Movimentações</div><svg style="position:absolute;left:137px;top:146px" width="15" height="9" viewBox="0 0 15 9"><path d="M1 1.2l6.5 6.5 6.5-6.5" fill="none" stroke="#34495e" stroke-width="1.2"/></svg><div style="position:absolute;left:0px;top:170px;width:168px;height:1px;background:#dcdcdc;"></div><svg style="position:absolute;left:-4px;top:185px" width="11" height="10" viewBox="0 0 11 10"><rect x="0" y="0" width="10" height="2.5" rx="0.5" fill="#34495e"/><path d="M0.7 3.5h8.6v5.5a1 1 0 0 1-1 1H1.7a1 1 0 0 1-1-1z" fill="#34495e"/><rect x="3.5" y="5" width="3" height="1" fill="#fff"/></svg><div class="t" style="left:12.7px;top:184.5px;font-size:10.5px;line-height:10.5px;font-weight:400;color:#34495e;letter-spacing:-0.175px;">Cadastros</div><svg style="position:absolute;left:137px;top:186px" width="15" height="9" viewBox="0 0 15 9"><path d="M1 1.2l6.5 6.5 6.5-6.5" fill="none" stroke="#34495e" stroke-width="1.2"/></svg><div style="position:absolute;left:0px;top:210px;width:168px;height:1px;background:#dcdcdc;"></div><svg style="position:absolute;left:-2px;top:221px" width="13" height="18" viewBox="0 0 13 18"><path d="M0 3.5a1.5 1.5 0 0 1 1.5-1.5h3c.3-1.2 1.2-2 2.5-2s2.2.8 2.5 2h3A1.5 1.5 0 0 1 14 3.5v13A1.5 1.5 0 0 1 12.5 18h-11A1.5 1.5 0 0 1 0 16.5z" fill="#8b8e98"/><rect x="2" y="6" width="1.6" height="1.6" fill="#fff"/><rect x="5" y="6" width="7" height="1.6" fill="#fff"/><rect x="2" y="10" width="1.6" height="1.6" fill="#fff"/><rect x="5" y="10" width="7" height="1.6" fill="#fff"/><rect x="2" y="14" width="1.6" height="1.6" fill="#fff"/><rect x="5" y="14" width="7" height="1.6" fill="#fff"/></svg><div class="t" style="left:23.8px;top:225px;font-size:10.5px;line-height:10.5px;font-weight:400;color:#7e8089;letter-spacing:0.133px;">Relatórios</div><svg style="position:absolute;left:-5px;top:261px" width="18" height="18" viewBox="0 0 18 18"><path d="M7.6 0h2.8l.5 2.6c.7.2 1.3.6 1.9 1l2.5-.9 1.4 2.4-2 1.8c.1.7.1 1.4 0 2.1l2 1.8-1.4 2.4-2.5-.9c-.6.5-1.2.8-1.9 1l-.5 2.6H7.6l-.5-2.6c-.7-.2-1.3-.6-1.9-1l-2.5.9-1.4-2.4 2-1.8c-.1-.7-.1-1.4 0-2.1l-2-1.8 1.4-2.4 2.5.9c.6-.5 1.2-.8 1.9-1z" fill="#8b8e98" transform="translate(0,0.5)"/><circle cx="9" cy="8.5" r="2.8" fill="#fff"/></svg><div class="t" style="left:23.8px;top:265px;font-size:10.5px;line-height:10.5px;font-weight:400;color:#7e8089;letter-spacing:-0.150px;">Configurações</div><svg style="position:absolute;left:-1px;top:301px" width="13" height="17" viewBox="0 0 13 17"><path d="M0 0h11v16h1.5v1H0z" fill="#8b8e98"/><rect x="2" y="2" width="1.8" height="1.8" fill="#fff"/><rect x="6" y="2" width="1.8" height="1.8" fill="#fff"/><rect x="2" y="5.5" width="1.8" height="1.8" fill="#fff"/><rect x="6" y="5.5" width="1.8" height="1.8" fill="#fff"/><rect x="2" y="9" width="1.8" height="1.8" fill="#fff"/><rect x="6" y="9" width="1.8" height="1.8" fill="#fff"/><rect x="3.8" y="13" width="2" height="4" fill="#fff"/></svg><div class="t" style="left:23.8px;top:304px;font-size:10.5px;line-height:10.5px;font-weight:400;color:#7e8089;letter-spacing:-0.067px;">Empresa</div><svg style="position:absolute;left:-2px;top:342px" width="13" height="14" viewBox="0 0 13 14"><path d="M3 3.2a5.2 5.2 0 1 0 6.2 0" fill="none" stroke="#8b8e98" stroke-width="1.5"/><path d="M6.1 0.5v5.5" stroke="#8b8e98" stroke-width="1.5"/></svg><div class="t" style="left:17.6px;top:344px;font-size:10.5px;line-height:10.5px;font-weight:400;color:#7e8089;letter-spacing:-0.100px;">Sair</div><div class="t" style="left:182.5px;top:4.5px;font-size:10.5px;line-height:10.5px;font-weight:700;color:#3f5366;letter-spacing:0.025px;">Dashboard</div><div class="t" style="left:182.5px;top:22px;font-size:9px;line-height:9px;font-weight:400;color:#474a5b;letter-spacing:0.140px;">Início</div><div class="t" style="right:116.00px;top:46px;font-size:10.5px;line-height:10.5px;font-weight:400;color:#4d6278;">Mês</div><div style="position:absolute;left:1474px;top:44px;width:100px;height:12px;border:1px solid #6f6f6f;border-radius:7px;background:#fff"></div><div class="t" style="left:1478.4px;top:46px;font-size:10.5px;line-height:10.5px;font-weight:400;color:#000;letter-spacing:-0.018px;">Abril - 2025</div><svg style="position:absolute;left:1562px;top:47px" width="10" height="8" viewBox="0 0 10 8"><path d="M1.2 1.5l3.8 3.8 3.8-3.8" fill="none" stroke="#000" stroke-width="2"/></svg><div class="t" style="left:479.31px;width:800px;text-align:center;top:836.5px;font-size:10.5px;line-height:10.5px;font-weight:400;color:#4a5261;letter-spacing:0.020px;">Todos direitos reservados | ANRON Software - SUPORTE</div><div style="position:absolute;left:1448px;top:824px;width:128px;height:17px;background:#73b38a;border-radius:4px;box-shadow:0 1px 3px rgba(0,0,0,0.25)"></div><div class="t" style="left:1111.74px;width:800px;text-align:center;top:827px;font-size:10.6px;line-height:10.6px;font-weight:400;color:#fff;letter-spacing:0.074px;">LOCAL | 192.168.1.20</div>
</body></html>
